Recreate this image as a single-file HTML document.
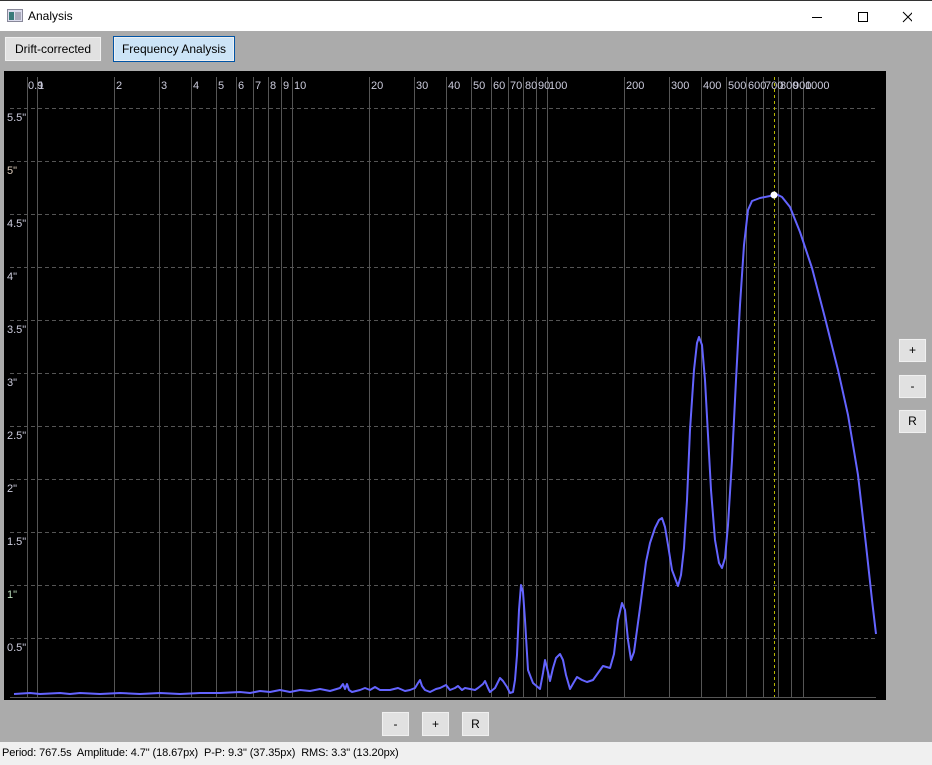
<!DOCTYPE html>
<html><head><meta charset="utf-8"><style>
*{margin:0;padding:0;box-sizing:border-box}
body{width:932px;height:765px;overflow:hidden;background:#ababab;font-family:"Liberation Sans",sans-serif;font-size:12px;position:relative}
.tb{position:absolute;left:0;top:0;width:932px;height:31px;background:#fff;border-top:1px solid #333}
.tb .t{position:absolute;left:28px;top:8px;font-size:12px;color:#000}
.btn{position:absolute;background:#e1e1e1;border:1px solid #adadad;box-shadow:inset 0 0 0 1px #f0f0f0;font-size:12px;text-align:center;color:#000}
.status{position:absolute;left:0;top:742px;width:932px;height:23px;background:#f0f0f0;font-size:11px;letter-spacing:-0.1px;padding:5px 0 0 2px;color:#000}
</style></head><body>
<div class="tb">
<svg style="position:absolute;left:7px;top:8px" width="16" height="14"><rect x="0.5" y="0.5" width="15" height="12" fill="#dde" stroke="#889"/><rect x="2" y="3" width="5" height="8" fill="#3a7a7a"/><rect x="8" y="3" width="6" height="8" fill="#aab"/></svg>
<div class="t">Analysis</div>
<svg style="position:absolute;left:812px;top:9px" width="100" height="14"><line x1="0" y1="7.5" x2="10" y2="7.5" stroke="#000"/><rect x="46.5" y="2.5" width="9" height="9" fill="none" stroke="#000"/><path d="M91 2L101 12M101 2L91 12" stroke="#000"/></svg>
</div>
<div class="btn" style="left:4px;top:36px;width:98px;height:26px;line-height:24px">Drift-corrected</div>
<div class="btn" style="left:113px;top:36px;width:122px;height:26px;line-height:24px;background:#cce4f7;border-color:#0054a6">Frequency Analysis</div>

<svg style="position:absolute;left:0;top:0" width="932" height="742">
<rect x="4" y="71" width="882" height="629" fill="#000"/>
<g stroke="#555" stroke-width="1">
<line x1="27.5" y1="77" x2="27.5" y2="697"/><line x1="37.5" y1="77" x2="37.5" y2="697"/><line x1="114.5" y1="77" x2="114.5" y2="697"/><line x1="159.5" y1="77" x2="159.5" y2="697"/><line x1="191.5" y1="77" x2="191.5" y2="697"/><line x1="216.5" y1="77" x2="216.5" y2="697"/><line x1="236.5" y1="77" x2="236.5" y2="697"/><line x1="253.5" y1="77" x2="253.5" y2="697"/><line x1="268.5" y1="77" x2="268.5" y2="697"/><line x1="281.5" y1="77" x2="281.5" y2="697"/><line x1="292.5" y1="77" x2="292.5" y2="697"/><line x1="369.5" y1="77" x2="369.5" y2="697"/><line x1="414.5" y1="77" x2="414.5" y2="697"/><line x1="446.5" y1="77" x2="446.5" y2="697"/><line x1="471.5" y1="77" x2="471.5" y2="697"/><line x1="491.5" y1="77" x2="491.5" y2="697"/><line x1="508.5" y1="77" x2="508.5" y2="697"/><line x1="523.5" y1="77" x2="523.5" y2="697"/><line x1="536.5" y1="77" x2="536.5" y2="697"/><line x1="547.5" y1="77" x2="547.5" y2="697"/><line x1="624.5" y1="77" x2="624.5" y2="697"/><line x1="669.5" y1="77" x2="669.5" y2="697"/><line x1="701.5" y1="77" x2="701.5" y2="697"/><line x1="726.5" y1="77" x2="726.5" y2="697"/><line x1="746.5" y1="77" x2="746.5" y2="697"/><line x1="763.5" y1="77" x2="763.5" y2="697"/><line x1="778.5" y1="77" x2="778.5" y2="697"/><line x1="791.5" y1="77" x2="791.5" y2="697"/><line x1="803.5" y1="77" x2="803.5" y2="697"/>
<line x1="10" y1="697.5" x2="876" y2="697.5"/>
</g>
<g stroke="#555" stroke-dasharray="4,3">
<line x1="10" y1="108.5" x2="876" y2="108.5"/><line x1="10" y1="161.5" x2="876" y2="161.5"/><line x1="10" y1="214.5" x2="876" y2="214.5"/><line x1="10" y1="267.5" x2="876" y2="267.5"/><line x1="10" y1="320.5" x2="876" y2="320.5"/><line x1="10" y1="373.5" x2="876" y2="373.5"/><line x1="10" y1="426.5" x2="876" y2="426.5"/><line x1="10" y1="479.5" x2="876" y2="479.5"/><line x1="10" y1="532.5" x2="876" y2="532.5"/><line x1="10" y1="585.5" x2="876" y2="585.5"/><line x1="10" y1="638.5" x2="876" y2="638.5"/>
</g>
<line x1="774.5" y1="77" x2="774.5" y2="697" stroke="#b8b800" stroke-dasharray="3,3"/>
<g font-family="Liberation Sans,sans-serif" font-size="11" fill="#ccd">
<text x="28" y="89">0.9</text><text x="38" y="89">1</text><text x="116" y="89">2</text><text x="161" y="89">3</text><text x="193" y="89">4</text><text x="218" y="89">5</text><text x="238" y="89">6</text><text x="255" y="89">7</text><text x="270" y="89">8</text><text x="283" y="89">9</text><text x="294" y="89">10</text><text x="371" y="89">20</text><text x="416" y="89">30</text><text x="448" y="89">40</text><text x="473" y="89">50</text><text x="493" y="89">60</text><text x="510" y="89">70</text><text x="525" y="89">80</text><text x="538" y="89">90</text><text x="549" y="89">100</text><text x="626" y="89">200</text><text x="671" y="89">300</text><text x="703" y="89">400</text><text x="728" y="89">500</text><text x="748" y="89">600</text><text x="765" y="89">700</text><text x="780" y="89">800</text><text x="793" y="89">900</text><text x="805" y="89">1000</text>
<text x="7" y="121">5.5"</text><text x="7" y="174" fill="#dcb">5"</text><text x="7" y="227">4.5"</text><text x="7" y="280">4"</text><text x="7" y="333">3.5"</text><text x="7" y="386">3"</text><text x="7" y="439">2.5"</text><text x="7" y="492">2"</text><text x="7" y="545">1.5"</text><text x="7" y="598" fill="#bdb">1"</text><text x="7" y="651">0.5"</text>
</g>
<polyline fill="none" stroke="#6464ff" stroke-width="2" stroke-linejoin="round" points="14,694 30,693 40,694 60,693 70,694 80,693 100,694 120,693 140,694 160,693 180,694 200,693 220,693 240,692 250,693 260,691 270,692 280,690 290,692 300,690 310,691 320,689 330,691 340,688 343,684 345,689 347,684 349,690 352,692 360,690 365,688 370,690 375,687 380,690 390,690 398,688 405,691 410,690 415,688 418,683 420,680 422,686 425,690 430,692 436,689 440,688 446,685 450,690 455,688 458,686 462,690 465,688 470,689 475,690 478,688 483,684 485,681 488,688 490,692 495,688 500,678 503,681 507,687 510,693 513,692 515,680 517,655 519,610 521,585 523,592 525,620 528,670 533,683 540,689 543,673 545,660 547,668 550,681 553,668 556,658 560,654 563,660 566,675 570,689 574,682 577,677 582,680 587,682 593,680 598,673 603,666 610,668 614,654 618,620 622,603 625,610 628,640 631,660 634,652 637,630 640,608 643,585 646,562 650,543 655,528 659,520 662,518 665,527 668,545 672,570 678,586 681,575 684,548 687,500 690,430 694,370 697,343 699,337 702,345 705,380 708,435 711,490 715,540 719,563 722,568 725,558 728,525 732,460 736,380 740,305 744,245 748,210 752,201 760,198 770,196 776,194 782,197 790,207 800,232 812,268 825,318 838,370 848,415 858,475 866,545 872,600 876,634"/>
<circle cx="774" cy="195" r="3.5" fill="#fff"/>
</svg>

<div class="btn" style="left:898px;top:338px;width:29px;height:25px;line-height:23px">+</div>
<div class="btn" style="left:898px;top:374px;width:29px;height:25px;line-height:23px">-</div>
<div class="btn" style="left:898px;top:409px;width:29px;height:25px;line-height:23px">R</div>
<div class="btn" style="left:381px;top:711px;width:29px;height:26px;line-height:24px">-</div>
<div class="btn" style="left:421px;top:711px;width:29px;height:26px;line-height:24px">+</div>
<div class="btn" style="left:461px;top:711px;width:29px;height:26px;line-height:24px">R</div>
<div class="status">Period: 767.5s&nbsp; Amplitude: 4.7" (18.67px)&nbsp; P-P: 9.3" (37.35px)&nbsp; RMS: 3.3" (13.20px)</div>
</body></html>
